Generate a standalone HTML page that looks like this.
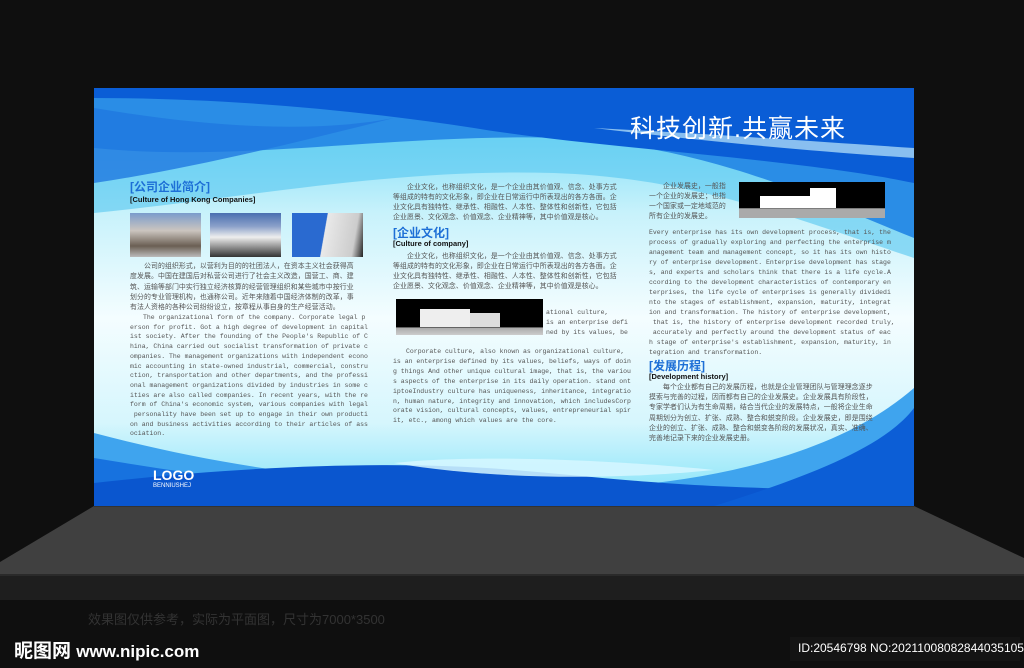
<!DOCTYPE html>
<html><head><meta charset="utf-8">
<style>
*{margin:0;padding:0;box-sizing:border-box}
body{width:1024px;height:668px;background:#0f0f0f;position:relative;overflow:hidden;font-family:"Liberation Sans","Noto Sans CJK SC",sans-serif}
.a{position:absolute;white-space:nowrap}
.cn{font-family:"Liberation Sans","Noto Sans CJK SC",sans-serif;font-size:6.9px;color:#555;letter-spacing:0.1px}
.en{font-family:"Liberation Mono",monospace;font-size:6.5px;color:#555}
.h{font-family:"Liberation Sans","Noto Sans CJK SC",sans-serif;font-weight:bold;font-size:12px;color:#1d6fd6}
.s{font-family:"Liberation Sans",sans-serif;font-weight:bold;font-size:7.5px;color:#111}
</style></head><body>
<!-- floor -->
<svg class="a" style="left:0;top:500px" width="1024" height="110">
<polygon points="94,6 914,6 1024,58 1024,75 0,75 0,62" fill="#404040"/>
<rect x="0" y="75" width="1024" height="25" fill="#1e1e1e"/>
<rect x="0" y="74" width="1024" height="2" fill="#2a2a2a"/>
<rect x="94" y="5" width="820" height="2" fill="#333"/>
</svg>
<!-- board -->
<svg class="a" style="left:94px;top:88px" width="820" height="418">
<defs>
<linearGradient id="bg" x1="0" y1="0" x2="0" y2="1">
<stop offset="0" stop-color="#5fd4f5"/><stop offset="0.3" stop-color="#c8f2fb"/><stop offset="0.55" stop-color="#f4fdff"/><stop offset="0.8" stop-color="#d6f6fd"/><stop offset="1" stop-color="#7fe2f8"/></linearGradient>
</defs>
<rect width="820" height="418" fill="url(#bg)"/>
<path d="M0,0 H820 V170 C700,130 600,90 460,85 C300,80 150,110 0,125 Z" fill="#55c6f0" opacity="0.6"/>
<path d="M0,0 H820 V150 C720,110 620,60 470,50 C300,45 150,75 0,60 Z" fill="#2a8de6"/>
<path d="M0,0 H820 V95 C700,70 500,60 380,40 C250,20 120,10 0,10 Z" fill="#0a5dd6"/>
<path d="M0,20 C120,40 220,45 300,30 C200,55 100,80 0,95 Z" fill="#1f78e0" opacity="0.8"/>
<path d="M500,40 C600,45 700,52 820,60 L820,70 C700,62 600,52 500,40Z" fill="#bfe9fb" opacity="0.7"/>
<path d="M0,345 C150,385 300,400 450,402 C600,400 740,370 820,300 V418 H0 Z" fill="#3fa4ee"/>
<path d="M0,370 C150,395 300,412 450,418 H0Z" fill="#1772df"/>
<path d="M0,395 C150,378 300,372 420,382 C520,390 620,405 820,400 V418 H0Z" fill="#0a56cf"/>
<path d="M300,375 C380,366 520,372 620,382 C520,392 400,392 300,375Z" fill="#d6f7ff" opacity="0.85"/>
<path d="M620,418 C710,390 790,360 820,320 V418Z" fill="#0c5ed6"/>
</svg>
<div class="a" style="left:630px;top:109px;font-size:25px;color:#fff;letter-spacing:1px">科技创新.共赢未来</div>
<div class="a" style="left:153px;top:467px;font-size:14px;font-weight:bold;color:#fff">LOGO</div>
<div class="a" style="left:153px;top:483px;font-size:6px;color:#fff">BENNIUSHEJ</div>

<!-- col1 -->
<div class="a h" style="left:130px;top:178px">[公司企业简介]</div>
<div class="a s" style="left:130px;top:195px">[Culture of Hong Kong Companies]</div>
<div class="a" style="left:130px;top:213px;width:71px;height:44px;background:linear-gradient(#7a9ccc 0,#cbc5bf 40%,#6b5f53 75%,#bbb 100%)"></div>
<div class="a" style="left:210px;top:213px;width:71px;height:44px;background:linear-gradient(#4a6fb0 0,#8aa0c9 30%,#eee 55%,#333 100%)"></div>
<div class="a" style="left:292px;top:213px;width:71px;height:44px;background:linear-gradient(100deg,#2a6ad0 0,#2a6ad0 45%,#e9e9e9 46%,#ccc 85%,#222 100%)"></div>
<div class="a cn" style="left:130px;top:262px;line-height:10.3px">　　公司的组织形式，以营利为目的的社团法人，在资本主义社会获得高<br>度发展。中国在建国后对私营公司进行了社会主义改造，国营工、商、建<br>筑、运输等部门中实行独立经济核算的经营管理组织和某些城市中按行业<br>划分的专业管理机构，也通称公司。近年来随着中国经济体制的改革，事<br>有法人资格的各种公司纷纷设立，按章程从事自身的生产经营活动。</div>
<div class="a en" style="left:130px;top:313px;line-height:9.7px">　　The organizational form of the company. Corporate legal p<br>erson for profit. Got a high degree of development in capital<br>ist society. After the founding of the People's Republic of C<br>hina, China carried out socialist transformation of private c<br>ompanies. The management organizations with independent econo<br>mic accounting in state-owned industrial, commercial, constru<br>ction, transportation and other departments, and the professi<br>onal management organizations divided by industries in some c<br>ities are also called companies. In recent years, with the re<br>form of China's economic system, various companies with legal<br>&nbsp;personality have been set up to engage in their own producti<br>on and business activities according to their articles of ass<br>ociation.</div>

<!-- col2 -->
<div class="a cn" style="left:393px;top:183px;line-height:10px">　　企业文化，也称组织文化，是一个企业由其价值观、信念、处事方式<br>等组成的特有的文化形象，即企业在日常运行中所表现出的各方各面。企<br>业文化具有独特性、继承性、相融性、人本性、整体性和创新性，它包括<br>企业愿景、文化观念、价值观念、企业精神等，其中价值观是核心。</div>
<div class="a h" style="left:393px;top:224px">[企业文化]</div>
<div class="a s" style="left:393px;top:239px">[Culture of company]</div>
<div class="a cn" style="left:393px;top:252px;line-height:10px">　　企业文化，也称组织文化，是一个企业由其价值观、信念、处事方式<br>等组成的特有的文化形象，即企业在日常运行中所表现出的各方各面。企<br>业文化具有独特性、继承性、相融性、人本性、整体性和创新性，它包括<br>企业愿景、文化观念、价值观念、企业精神等，其中价值观是核心。</div>
<div class="a" style="left:396px;top:299px;width:147px;height:36px;background:linear-gradient(#000 0,#000 78%,#aaa 80%,#ccc 100%)"></div>
<div class="a" style="left:420px;top:309px;width:50px;height:18px;background:#eee"></div>
<div class="a" style="left:470px;top:313px;width:30px;height:14px;background:#ddd"></div>
<div class="a en" style="left:546px;top:308px;line-height:10px">ational culture,<br>is an enterprise defi<br>ned by its values, be</div>
<div class="a en" style="left:393px;top:347px;line-height:9.9px">　　Corporate culture, also known as organizational culture,<br>is an enterprise defined by its values, beliefs, ways of doin<br>g things And other unique cultural image, that is, the variou<br>s aspects of the enterprise in its daily operation. stand ont<br>iptoeIndustry culture has uniqueness, inheritance, integratio<br>n, human nature, integrity and innovation, which includesCorp<br>orate vision, cultural concepts, values, entrepreneurial spir<br>it, etc., among which values are the core.</div>

<!-- col3 -->
<div class="a cn" style="left:649px;top:182px;line-height:10px">　　企业发展史，一般指<br>一个企业的发展史；也指<br>一个国家或一定地域范的<br>所有企业的发展史。</div>
<div class="a" style="left:739px;top:182px;width:146px;height:36px;background:linear-gradient(#000 0,#000 72%,#aaa 74%,#aaa 100%)"></div>
<div class="a" style="left:760px;top:196px;width:60px;height:12px;background:#fff"></div>
<div class="a" style="left:810px;top:188px;width:26px;height:20px;background:#fff"></div>
<div class="a en" style="left:649px;top:228px;line-height:10px">Every enterprise has its own development process, that is, the<br>process of gradually exploring and perfecting the enterprise m<br>anagement team and management concept, so it has its own histo<br>ry of enterprise development. Enterprise development has stage<br>s, and experts and scholars think that there is a life cycle.A<br>ccording to the development characteristics of contemporary en<br>terprises, the life cycle of enterprises is generally dividedi<br>nto the stages of establishment, expansion, maturity, integrat<br>ion and transformation. The history of enterprise development,<br>&nbsp;that is, the history of enterprise development recorded truly,<br>&nbsp;accurately and perfectly around the development status of eac<br>h stage of enterprise's establishment, expansion, maturity, in<br>tegration and transformation.</div>
<div class="a h" style="left:649px;top:357px">[发展历程]</div>
<div class="a s" style="left:649px;top:372px">[Development history]</div>
<div class="a cn" style="left:649px;top:383px;line-height:10.2px">　　每个企业都有自己的发展历程，也就是企业管理团队与管理理念逐步<br>摸索与完善的过程，因而都有自己的企业发展史。企业发展具有阶段性，<br>专家学者们认为有生命周期，结合当代企业的发展特点，一般将企业生命<br>周期划分为创立、扩张、成熟、整合和蜕变阶段。企业发展史，即是围绕<br>企业的创立、扩张、成熟、整合和蜕变各阶段的发展状况，真实、准确、<br>完善地记录下来的企业发展史册。</div>

<div class="a" style="left:88px;top:609px;font-size:13px;color:#333">效果图仅供参考，实际为平面图，尺寸为7000*3500</div>
<div class="a" style="left:14px;top:636px;font-size:19px;font-weight:bold;color:#fff">昵图网 <span style="font-size:17px">www.nipic.com</span></div>
<div class="a" style="left:790px;top:637px;width:230px;height:24px;background:#141414"></div>
<div class="a" style="left:798px;top:641px;font-size:12px;color:#fff">ID:20546798 NO:20211008082844035105</div>
</body></html>
